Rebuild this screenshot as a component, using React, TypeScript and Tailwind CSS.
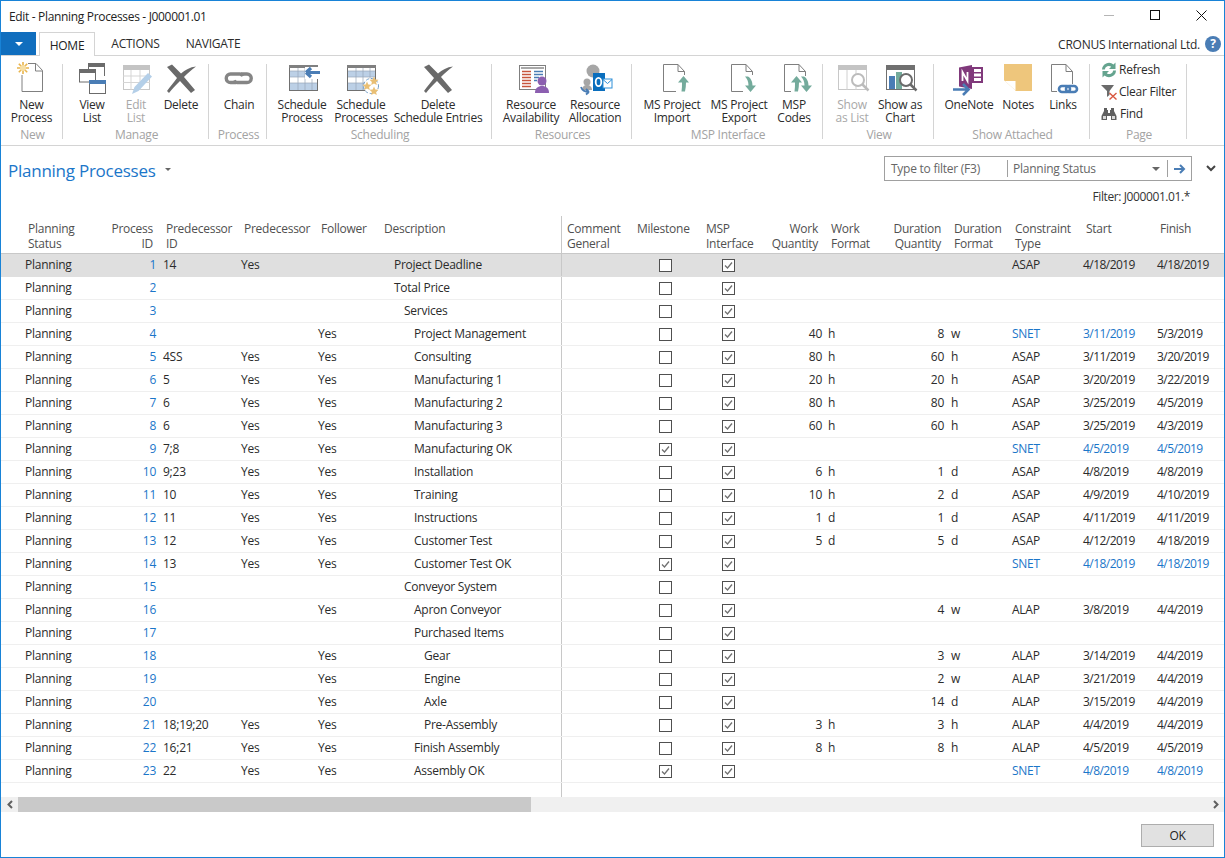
import type { ReactNode } from "react";

const FONT = "font-['Open_Sans','Noto_Sans',sans-serif]";

// ---- ribbon icons, all drawn on a 32x32 box ----

const Icon = ({ children }: { children: ReactNode }) => (
  <svg width="32" height="32" viewBox="0 0 32 32" className="overflow-visible">
    {children}
  </svg>
);

const BigX = () => (
  <Icon>
    <path
      d="M2 4L7 1.500 16 10.500C20 7 25 4 31 3.500 26 7 22 11 19 14L30 27 26 30 15 18C11 22 7 26 4 30L2 28C5 24 9 19 12 15z"
      fill="#6a6a6a"
    />
  </Icon>
);

const NewProcessIcon = () => (
  <Icon>
    <path d="M12 .5h8l6.500 7v21H6V12" fill="#fff" stroke="#808080" />
    <path d="M19.500 .5v7.500h7" fill="none" stroke="#808080" />
    <g stroke="#e9b44c" strokeWidth="1.600">
      <path d="M7-1v12M1 5h12M2.800.8l8.400 8.400M11.200.8L2.800 9.200" />
    </g>
    <circle cx="7" cy="5" r="3" fill="#f6dfa6" />
  </Icon>
);

const ViewListIcon = () => (
  <Icon>
    <path d="M12.500 3v9.500M28.500 3v10" stroke="#6b6b6b" fill="none" />
    <path d="M19 12.500h-7" stroke="#6b6b6b" />
    <rect x="12" y="0" width="17" height="4" fill="#6b6b6b" />
    <rect x="3.500" y="6.500" width="16" height="12.500" fill="#fff" stroke="#6b6b6b" />
    <rect x="3" y="6" width="17" height="4" fill="#6b6b6b" />
    <rect x="13.500" y="17.500" width="16" height="13" fill="#fff" stroke="#6b6b6b" />
    <rect x="13" y="17" width="17" height="4" fill="#4a7db5" />
  </Icon>
);

const EditListIcon = () => (
  <Icon>
    <rect x="3.500" y="2.500" width="26" height="24" fill="#fff" stroke="#c8c8c8" />
    <rect x="3" y="2" width="27" height="5" fill="#c4c4c4" />
    <path d="M3 13h27M3 19.500h27M11 7v20M20 7v20" stroke="#d5d5d5" />
    <path d="M12 31l2.500-7L28 10l4 3.500L18.500 28z" fill="#b4cfe8" />
  </Icon>
);

const ChainIcon = () => (
  <Icon>
    <g fill="none" stroke="#858585" strokeWidth="3.400">
      <path d="M13 19.500H7.500a4.200 4.200 0 0 1 0-8.500H17a4.200 4.200 0 0 1 3 2" />
      <path d="M18 11h6a4.200 4.200 0 0 1 0 8.500H14a4.200 4.200 0 0 1-3-2" />
    </g>
  </Icon>
);

const GridBase = () => (
  <>
    <rect x="1.500" y="1.500" width="28" height="25" fill="#fff" stroke="#707070" />
    <rect x="1" y="1" width="29" height="3" fill="#808080" />
    <rect x="2" y="7" width="27" height="6" fill="#bcd0e6" />
    <rect x="2" y="19" width="27" height="7" fill="#bcd0e6" />
    <path d="M2 7h27M2 13h27M2 19h27M10 4v22M17 4v22M24 4v22" stroke="#9aa8b8" strokeWidth=".7" />
  </>
);

const ScheduleProcessIcon = () => (
  <Icon>
    <g transform="translate(2 1)">
      <GridBase />
      <rect x="17" y="3" width="16" height="12" fill="#fff" />
      <path d="M18 8.500h14M18 8.500l5-4.500M18 8.500l5 4.500" fill="none" stroke="#4a7db5" strokeWidth="3.200" />
    </g>
  </Icon>
);

const Star = ({ x, y }: { x: number; y: number }) => (
  <path
    transform={`translate(${x} ${y})`}
    d="M0-4.500l1.300 3 3.200.3-2.400 2.100.7 3.100L0 2.400-2.800 4l.7-3.100-2.400-2.100 3.200-.3z"
    fill="#e9bf74"
  />
);

const ScheduleProcessesIcon = () => (
  <Icon>
    <g transform="translate(1 1)">
      <GridBase />
      <circle cx="25" cy="22" r="7.500" fill="#fff" stroke="#6e9ac6" strokeDasharray="3 2" />
      <Star x={28} y={17} />
      <Star x={21} y={22} />
      <Star x={28} y={27} />
    </g>
  </Icon>
);

const ResourceAvailIcon = () => (
  <Icon>
    <rect x="4.500" y="2.500" width="26" height="24" fill="#fff" stroke="#7f7f7f" />
    <rect x="6" y="4" width="23" height="2" fill="#a8a8a8" />
    <path d="M7 8.500h9M7 11.500h9M7 14.500h9M7 17.500h9M7 20.500h9M7 23.500h9" stroke="#c8553d" strokeWidth="1.300" />
    <path d="M19 8.500h9M19 11.500h9M19 14.500h5M19 17.500h3" stroke="#4a7db5" strokeWidth="1.300" />
    <circle cx="27" cy="18" r="4.500" fill="#8c5fb0" />
    <path d="M20 30c0-5 3-7 7-7s7 2 7 7z" fill="#8c5fb0" />
  </Icon>
);

const ResourceAllocIcon = () => (
  <Icon>
    <circle cx="14" cy="8" r="6.500" fill="#a6a6a6" />
    <circle cx="8" cy="19" r="3.500" fill="#a6a6a6" />
    <path d="M3 27c0-3 2-5 5-5s5 2 5 5z" fill="#a6a6a6" />
    <path d="M14 10h12v18H14z" fill="#0a6ebd" />
    <rect x="24" y="16" width="9" height="9" fill="#fff" stroke="#2f8fd8" />
    <path d="M24 16.500l4.500 4 4.500-4" fill="none" stroke="#2f8fd8" />
    <ellipse cx="19.500" cy="19" rx="2.800" ry="4.200" fill="none" stroke="#fff" strokeWidth="1.800" />
    <path d="M2 24c1 3 4 5 8 5M10 29l-3-3M10 29l-3 2.500" fill="none" stroke="#4a7db5" strokeWidth="1.800" />
  </Icon>
);

const Doc = ({ x }: { x: number }) => (
  <path
    transform={`translate(${x} 0)`}
    d="M.5 1.500h14.500l6.500 7v20H.5z M15 1.500v7h6.500"
    fill="#fff"
    stroke="#7f7f7f"
  />
);

const UpArrow = ({ x }: { x: number }) => (
  <path transform={`translate(${x} 0)`} d="M0 19.500L5.500 13l5.500 6.500H8c0 3-.3 6-1 9H3.500c.5-3 .5-6 .5-9z" fill="#74ab9c" />
);
const DownArrow = ({ x }: { x: number }) => (
  <path transform={`translate(${x} 0)`} d="M0 22.500L5.500 29l5.500-6.500H7.500c0-3-1-7-4.500-9H0c2 2 3.500 5 3.500 9z" fill="#74ab9c" />
);

const ProjectImportIcon = () => (
  <Icon>
    <Doc x={7} />
    <rect x="20" y="12" width="14" height="18" fill="#fff" />
    <UpArrow x={22} />
  </Icon>
);

const ProjectExportIcon = () => (
  <Icon>
    <Doc x={8} />
    <rect x="20" y="12" width="14" height="18" fill="#fff" />
    <DownArrow x={22} />
  </Icon>
);

const ProjectCodesIcon = () => (
  <Icon>
    <Doc x={6} />
    <rect x="13" y="13" width="21" height="17" fill="#fff" />
    <UpArrow x={13} />
    <DownArrow x={23} />
  </Icon>
);

const ShowListIcon = () => (
  <Icon>
    <rect x="2.500" y="2.500" width="28" height="24" fill="#fff" stroke="#c8c8c8" />
    <rect x="2" y="2" width="29" height="5" fill="#c4c4c4" />
    <path d="M11 7v20M20 7v20" stroke="#d0d0d0" />
    <circle cx="22" cy="17" r="6" fill="#fff" stroke="#bcbcbc" strokeWidth="2" />
    <path d="M26.500 21.500l6 6" stroke="#bcbcbc" strokeWidth="2.500" />
  </Icon>
);

const ShowChartIcon = () => (
  <Icon>
    <rect x="2.500" y="2.500" width="28" height="24" fill="#fff" stroke="#707070" />
    <rect x="2" y="2" width="29" height="5" fill="#707070" />
    <rect x="5" y="13" width="6" height="13" fill="#4a7db5" />
    <rect x="12" y="9" width="6" height="17" fill="#74ab9c" />
    <circle cx="22" cy="17" r="6" fill="#fff" stroke="#6b6b6b" strokeWidth="2" />
    <path d="M26.500 21.500l6 6" stroke="#6b6b6b" strokeWidth="2.500" />
  </Icon>
);

const OneNoteIcon = () => (
  <Icon>
    <path d="M6 4.500L19 2v24L6 23.500z" fill="#80397b" />
    <rect x="19" y="4" width="11" height="16" fill="#80397b" />
    <path d="M21 6h7v3h-7zM21 10.500h7v3h-7zM21 15h7v3h-7z" fill="#fff" />
    <path d="M9.500 18V9l5 9V9" fill="none" stroke="#fff" strokeWidth="1.800" />
    <path d="M0 26.500h15M10 21l5.500 5.500L10 32" fill="none" stroke="#4a7db5" strokeWidth="2.600" />
  </Icon>
);

const NotesIcon = () => (
  <Icon>
    <path d="M2 1h28v27H14L2 17z" fill="#eec67c" />
    <path d="M2.500 17.500H14V28" fill="#fff" stroke="#eec67c" />
  </Icon>
);

const LinksIcon = () => (
  <Icon>
    <Doc x={4} />
    <rect x="10" y="21" width="22" height="10" fill="#fff" />
    <g fill="none" stroke="#4a7db5" strokeWidth="2.600">
      <rect x="12" y="23" width="11" height="6" rx="3" />
      <rect x="19" y="23" width="11" height="6" rx="3" />
    </g>
  </Icon>
);

const RefreshIcon = () => (
  <svg width="16" height="16" viewBox="0 0 16 16">
    <path d="M1 7.500a7 7 0 0 1 11.500-5L14.500 .5V7H8l2.200-2.200A4 4 0 0 0 3.800 7.500z" fill="#65a48f" />
    <path d="M15 8.500a7 7 0 0 1-11.500 5L1.500 15.500V9H8l-2.200 2.200a4 4 0 0 0 6.400-2.700z" fill="#65a48f" />
  </svg>
);

const ClearFilterIcon = () => (
  <svg width="17" height="16" viewBox="0 0 17 16">
    <path d="M0 1h13L8.500 7v4L6 13V7z" fill="#6b6b6b" />
    <path d="M8.500 9l7 6.500M15.500 9l-7 6.500" stroke="#d9583f" strokeWidth="1.400" />
  </svg>
);

const FindIcon = () => (
  <svg width="16" height="14" viewBox="0 0 16 14" fill="#5f5f5f">
    <path d="M3 1h3v2h1v3h2V3h1V1h3v3l2.500 5v4H10V9H6v4H.5V9L3 4z" />
    <path d="M2 9h3v3H2zM11 9h3v3h-3z" fill="#d8d8d8" />
  </svg>
);

// ---- ribbon structure ----

const Sep = () => <div className="w-px h-[75px] bg-[#d4d4d4] mt-[8px] shrink-0" />;

function RibbonButton({
  w,
  icon,
  lines,
  off,
}: {
  w: string;
  icon: ReactNode;
  lines: string[];
  off?: boolean;
}) {
  return (
    <div className={`${w} shrink-0 flex flex-col items-center`}>
      <div className="h-[32px] w-[32px] mt-[7px]">{icon}</div>
      <div className={`mt-[3px] text-center leading-[13px] whitespace-nowrap ${off ? "text-[#a8a8a8]" : "text-[#2b2b2b]"}`}>
        {lines.map((l) => (
          <div key={l}>{l}</div>
        ))}
      </div>
    </div>
  );
}

function Group({
  w,
  pad,
  label,
  children,
}: {
  w: string;
  pad: string;
  label: string;
  children: ReactNode;
}) {
  return (
    <div className={`${w} shrink-0 flex flex-col h-full`}>
      <div className={`${pad} flex h-[72px]`}>{children}</div>
      <div className="pl-[2px] text-center text-[#a3a3a3] leading-[13px]">{label}</div>
    </div>
  );
}

function Ribbon() {
  return (
    <div className="h-[89px] flex border-b border-[#d4d4d4] box-content">
      <Group w="w-[61px]" pad="" label="New">
        <RibbonButton w="w-[61px]" icon={<NewProcessIcon />} lines={["New", "Process"]} />
      </Group>
      <Sep />
      <Group w="w-[145px]" pad="pl-[7px]" label="Manage">
        <RibbonButton w="w-[44px]" icon={<ViewListIcon />} lines={["View", "List"]} />
        <RibbonButton w="w-[44px]" icon={<EditListIcon />} lines={["Edit", "List"]} off />
        <RibbonButton w="w-[46px]" icon={<BigX />} lines={["Delete"]} />
      </Group>
      <Sep />
      <Group w="w-[57px]" pad="pl-[10px]" label="Process">
        <RibbonButton w="w-[40px]" icon={<ChainIcon />} lines={["Chain"]} />
      </Group>
      <Sep />
      <Group w="w-[224px]" pad="pl-[9px]" label="Scheduling">
        <RibbonButton w="w-[52px]" icon={<ScheduleProcessIcon />} lines={["Schedule", "Process"]} />
        <RibbonButton w="w-[66px]" icon={<ScheduleProcessesIcon />} lines={["Schedule", "Processes"]} />
        <RibbonButton w="w-[88px]" icon={<BigX />} lines={["Delete", "Schedule Entries"]} />
      </Group>
      <Sep />
      <Group w="w-[139px]" pad="pl-[8px]" label="Resources">
        <RibbonButton w="w-[62px]" icon={<ResourceAvailIcon />} lines={["Resource", "Availability"]} />
        <RibbonButton w="w-[66px]" icon={<ResourceAllocIcon />} lines={["Resource", "Allocation"]} />
      </Group>
      <Sep />
      <Group w="w-[190px]" pad="pl-[6px]" label="MSP Interface">
        <RibbonButton w="w-[68px]" icon={<ProjectImportIcon />} lines={["MS Project", "Import"]} />
        <RibbonButton w="w-[66px]" icon={<ProjectExportIcon />} lines={["MS Project", "Export"]} />
        <RibbonButton w="w-[44px]" icon={<ProjectCodesIcon />} lines={["MSP", "Codes"]} />
      </Group>
      <Sep />
      <Group w="w-[110px]" pad="pl-[7px]" label="View">
        <RibbonButton w="w-[44px]" icon={<ShowListIcon />} lines={["Show", "as List"]} off />
        <RibbonButton w="w-[52px]" icon={<ShowChartIcon />} lines={["Show as", "Chart"]} />
      </Group>
      <Sep />
      <Group w="w-[155px]" pad="pl-[10px]" label="Show Attached">
        <RibbonButton w="w-[50px]" icon={<OneNoteIcon />} lines={["OneNote"]} />
        <RibbonButton w="w-[48px]" icon={<NotesIcon />} lines={["Notes"]} />
        <RibbonButton w="w-[42px]" icon={<LinksIcon />} lines={["Links"]} />
      </Group>
      <Sep />
      <Group w="w-[96px]" pad="pl-[11px]" label="Page">
        <div className="flex flex-col gap-[6px] pt-[6px] text-[#2b2b2b] leading-[16px]">
          <div className="flex items-center gap-[2px]"><RefreshIcon /> Refresh</div>
          <div className="flex items-center gap-[1px]"><ClearFilterIcon /> Clear Filter</div>
          <div className="flex items-center gap-[3px]"><FindIcon /> Find</div>
        </div>
      </Group>
      <Sep />
    </div>
  );
}

// ---- table ----

type Row = {
  id: number;
  predId?: string;
  pred?: boolean;
  follower?: boolean;
  desc: string;
  level: number;
  milestone?: boolean;
  wq?: string;
  wf?: string;
  dq?: string;
  df?: string;
  type?: string;
  start?: string;
  finish?: string;
  startLink?: boolean;
  finishLink?: boolean;
};

const rows: Row[] = [
  { id: 1, predId: "14", pred: true, desc: "Project Deadline", level: 0, type: "ASAP", start: "4/18/2019", finish: "4/18/2019" },
  { id: 2, desc: "Total Price", level: 0 },
  { id: 3, desc: "Services", level: 1 },
  { id: 4, follower: true, desc: "Project Management", level: 2, wq: "40", wf: "h", dq: "8", df: "w", type: "SNET", start: "3/11/2019", finish: "5/3/2019", startLink: true },
  { id: 5, predId: "4SS", pred: true, follower: true, desc: "Consulting", level: 2, wq: "80", wf: "h", dq: "60", df: "h", type: "ASAP", start: "3/11/2019", finish: "3/20/2019" },
  { id: 6, predId: "5", pred: true, follower: true, desc: "Manufacturing 1", level: 2, wq: "20", wf: "h", dq: "20", df: "h", type: "ASAP", start: "3/20/2019", finish: "3/22/2019" },
  { id: 7, predId: "6", pred: true, follower: true, desc: "Manufacturing 2", level: 2, wq: "80", wf: "h", dq: "80", df: "h", type: "ASAP", start: "3/25/2019", finish: "4/5/2019" },
  { id: 8, predId: "6", pred: true, follower: true, desc: "Manufacturing 3", level: 2, wq: "60", wf: "h", dq: "60", df: "h", type: "ASAP", start: "3/25/2019", finish: "4/3/2019" },
  { id: 9, predId: "7;8", pred: true, follower: true, desc: "Manufacturing OK", level: 2, milestone: true, type: "SNET", start: "4/5/2019", finish: "4/5/2019", startLink: true, finishLink: true },
  { id: 10, predId: "9;23", pred: true, follower: true, desc: "Installation", level: 2, wq: "6", wf: "h", dq: "1", df: "d", type: "ASAP", start: "4/8/2019", finish: "4/8/2019" },
  { id: 11, predId: "10", pred: true, follower: true, desc: "Training", level: 2, wq: "10", wf: "h", dq: "2", df: "d", type: "ASAP", start: "4/9/2019", finish: "4/10/2019" },
  { id: 12, predId: "11", pred: true, follower: true, desc: "Instructions", level: 2, wq: "1", wf: "d", dq: "1", df: "d", type: "ASAP", start: "4/11/2019", finish: "4/11/2019" },
  { id: 13, predId: "12", pred: true, follower: true, desc: "Customer Test", level: 2, wq: "5", wf: "d", dq: "5", df: "d", type: "ASAP", start: "4/12/2019", finish: "4/18/2019" },
  { id: 14, predId: "13", pred: true, follower: true, desc: "Customer Test OK", level: 2, milestone: true, type: "SNET", start: "4/18/2019", finish: "4/18/2019", startLink: true, finishLink: true },
  { id: 15, desc: "Conveyor System", level: 1 },
  { id: 16, follower: true, desc: "Apron Conveyor", level: 2, dq: "4", df: "w", type: "ALAP", start: "3/8/2019", finish: "4/4/2019" },
  { id: 17, desc: "Purchased Items", level: 2 },
  { id: 18, follower: true, desc: "Gear", level: 3, dq: "3", df: "w", type: "ALAP", start: "3/14/2019", finish: "4/4/2019" },
  { id: 19, follower: true, desc: "Engine", level: 3, dq: "2", df: "w", type: "ALAP", start: "3/21/2019", finish: "4/4/2019" },
  { id: 20, follower: true, desc: "Axle", level: 3, dq: "14", df: "d", type: "ALAP", start: "3/15/2019", finish: "4/4/2019" },
  { id: 21, predId: "18;19;20", pred: true, follower: true, desc: "Pre-Assembly", level: 3, wq: "3", wf: "h", dq: "3", df: "h", type: "ALAP", start: "4/4/2019", finish: "4/4/2019" },
  { id: 22, predId: "16;21", pred: true, follower: true, desc: "Finish Assembly", level: 2, wq: "8", wf: "h", dq: "8", df: "h", type: "ALAP", start: "4/5/2019", finish: "4/5/2019" },
  { id: 23, predId: "22", pred: true, follower: true, desc: "Assembly OK", level: 2, milestone: true, type: "SNET", start: "4/8/2019", finish: "4/8/2019", startLink: true, finishLink: true },
];

const GRID =
  "grid grid-cols-[101px_58px_78px_77px_63px_183px_70px_69px_56px_69px_63px_60px_61px_71px_74px_69px]";

const indents = ["pl-[16px]", "pl-[26px]", "pl-[36px]", "pl-[46px]"];

function Check({ on }: { on?: boolean }) {
  return (
    <svg width="13" height="13" viewBox="0 0 13 13" className="block">
      <rect x=".5" y=".5" width="12" height="12" fill="#fff" stroke="#505050" />
      {on && <path d="M3 6.500l2.500 2.500 4.500-5.500" fill="none" stroke="#707070" strokeWidth="1.300" />}
    </svg>
  );
}

const LINK = "text-[#1b76c9]";

function HeaderCell({ a, b, right, pad }: { a: string; b?: string; right?: boolean; pad?: string }) {
  return (
    <div className={right ? "pr-[7px] text-right" : (pad ?? "pl-[6px]")}>
      <div>{a}</div>
      <div>{b ?? "\u00a0"}</div>
    </div>
  );
}

function DataRow({ r, selected }: { r: Row; selected: boolean }) {
  return (
    <div
      className={`${GRID} h-[23px] items-center border-b ${
        selected ? "bg-[#dfdfdf] border-[#dfdfdf]" : "border-[#efefef]"
      }`}
    >
      <div className="pl-[24px]">Planning</div>
      <div className={`pr-[4px] text-right ${LINK}`}>{r.id}</div>
      <div className="pl-[3px]">{r.predId}</div>
      <div className="pl-[3px]">{r.pred && "Yes"}</div>
      <div className="pl-[3px]">{r.follower && "Yes"}</div>
      <div className={`${indents[r.level]} h-full flex items-center`}>{r.desc}</div>
      <div className="h-full border-l border-[#c8c8c8]" />
      <div className="flex justify-center pr-[1px]"><Check on={r.milestone} /></div>
      <div className="flex justify-center"><Check on /></div>
      <div className="pr-[3px] text-right">{r.wq}</div>
      <div className="pl-[3px]">{r.wf}</div>
      <div className="pr-[4px] text-right">{r.dq}</div>
      <div className="pl-[3px]">{r.df}</div>
      <div className={`pl-[3px] ${r.type === "SNET" ? LINK : ""}`}>{r.type}</div>
      <div className={`pl-[3px] tracking-[-0.55px] ${r.startLink ? LINK : ""}`}>{r.start}</div>
      <div className={`pl-[3px] tracking-[-0.55px] ${r.finishLink ? LINK : ""}`}>{r.finish}</div>
    </div>
  );
}

function Table() {
  return (
    <div className="flex flex-col">
      <div className={`${GRID} h-[38px] pt-[5px] leading-[15px] text-[#505050] border-b border-[#c8c8c8]`}>
        <HeaderCell a="Planning" b="Status" pad="pl-[27px]" />
        <HeaderCell a="Process" b="ID" right />
        <HeaderCell a="Predecessor" b="ID" />
        <HeaderCell a="Predecessor" />
        <HeaderCell a="Follower" />
        <HeaderCell a="Description" />
        <div className="border-l border-[#c8c8c8] -mt-[5px]">
          <div className="pl-[5px] pt-[5px]">
            <div>Comment</div>
            <div>General</div>
          </div>
        </div>
        <HeaderCell a="Milestone" />
        <HeaderCell a="MSP" b="Interface" />
        <HeaderCell a="Work" b="Quantity" right />
        <HeaderCell a="Work" b="Format" />
        <HeaderCell a="Duration" b="Quantity" right />
        <HeaderCell a="Duration" b="Format" />
        <HeaderCell a="Constraint" b="Type" />
        <HeaderCell a="Start" />
        <HeaderCell a="Finish" />
      </div>
      {rows.map((r, i) => (
        <DataRow key={r.id} r={r} selected={i === 0} />
      ))}
      <div className={`${GRID} h-[14px]`}>
        <div className="col-start-7 border-l border-[#c8c8c8]" />
      </div>
    </div>
  );
}

export default function App() {
  return (
    <div className={`${FONT} w-[1225px] h-[858px] overflow-hidden bg-white border border-[#1883d7] text-[12px] text-[#2b2b2b] tracking-[-0.25px] flex flex-col`}>
      {/* title bar */}
      <div className="h-[31px] shrink-0 flex items-center justify-between pl-[8px]">
        <div className="text-[#222] tracking-[-0.33px]">Edit - Planning Processes - J000001.01</div>
        <div className="flex items-center pb-[3px]">
          <div className="w-[46px] flex justify-center"><div className="w-[10px] h-px bg-[#b5b5b5]" /></div>
          <div className="w-[46px] flex justify-center">
            <div className="w-[10px] h-[10px] border border-[#111]" />
          </div>
          <div className="w-[46px] flex justify-center">
            <svg width="11" height="11" viewBox="0 0 11 11"><path d="M.5.5l10 10M10.500.5l-10 10" stroke="#111" /></svg>
          </div>
        </div>
      </div>
      {/* tab strip */}
      <div className="h-[23px] shrink-0 flex items-end relative z-10">
        <div className="w-[35px] h-[23px] bg-[#106ebe] flex items-center justify-center">
          <div className="w-0 h-0 border-l-[4px] border-r-[4px] border-t-[4px] border-l-transparent border-r-transparent border-t-white" />
        </div>
        <div className="ml-[3px] w-[56px] h-[24px] -mb-px pt-[2px] border border-b-0 border-[#d4d4d4] bg-white flex items-center justify-center text-[#222]">HOME</div>
        <div className="w-[81px] text-center leading-[22px]">ACTIONS</div>
        <div className="w-[80px] -ml-[3px] text-center leading-[22px]">NAVIGATE</div>
        <div className="ml-auto flex items-center h-full pr-[3px] gap-[5px]">
          <span className="pt-[3px]">CRONUS International Ltd.</span>
          <span className="w-[16px] h-[16px] rounded-full bg-[#4a7db5] text-white font-bold text-[12px] leading-[16px] text-center">?</span>
        </div>
      </div>
      <div className="border-t border-[#d4d4d4]">
        <Ribbon />
      </div>
      {/* page header */}
      <div className="h-[70px] shrink-0 flex flex-col">
        <div className="flex items-start justify-between">
          <div className="flex items-center pl-[7px] pt-[12px] text-[17px] leading-[26px] text-[#1b76c9]">
            Planning Processes
            <span className="ml-[9px] -mt-[3px] w-0 h-0 border-l-[3px] border-r-[3px] border-t-[3px] border-l-transparent border-r-transparent border-t-[#666]" />
          </div>
          <div className="flex items-center mt-[10px] mr-[8px]">
            <div className="w-[308px] h-[25px] border border-[#a0a0a0] flex items-center text-[#666]">
              <div className="w-[123px] pl-[6px] border-r border-[#a0a0a0] leading-[17px]">Type to filter (F3)</div>
              <div className="pl-[5px] w-[160px] border-r border-[#a0a0a0] flex items-center justify-between pr-[7px] leading-[17px]">
                Planning Status
                <span className="w-0 h-0 border-l-[4px] border-r-[4px] border-t-[4px] border-l-transparent border-r-transparent border-t-[#666]" />
              </div>
              <svg width="12" height="10" viewBox="0 0 12 10" className="ml-[6px]">
                <path d="M0 5h10M6 1l4 4-4 4" fill="none" stroke="#4a7db5" strokeWidth="2" />
              </svg>
            </div>
            <svg width="10" height="7" viewBox="0 0 10 7" className="ml-[14px]">
              <path d="M1 1l4 4 4-4" fill="none" stroke="#444" strokeWidth="2" />
            </svg>
          </div>
        </div>
        <div className="text-right pr-[34px] leading-[16px] mt-[5px] tracking-[-0.4px] text-[#333]">Filter: J000001.01.*</div>
      </div>
      <Table />
      {/* horizontal scrollbar */}
      <div className="h-[15px] shrink-0 bg-[#f0f0f0] flex items-center">
        <div className="w-[17px] flex justify-center">
          <svg width="6" height="9" viewBox="0 0 6 9"><path d="M5 1L1.500 4.500 5 8" fill="none" stroke="#606060" strokeWidth="2" /></svg>
        </div>
        <div className="w-[513px] h-full bg-[#c9c9c9]" />
        <div className="ml-auto w-[16px] flex justify-center">
          <svg width="6" height="9" viewBox="0 0 6 9"><path d="M1 1l3.500 3.500L1 8" fill="none" stroke="#606060" strokeWidth="2" /></svg>
        </div>
      </div>
      {/* footer */}
      <div className="flex justify-end pr-[10px] pt-[12px]">
        <div className="w-[73px] h-[23px] bg-[#e1e1e1] border border-[#adadad] flex items-center justify-center text-[#222]">OK</div>
      </div>
    </div>
  );
}
